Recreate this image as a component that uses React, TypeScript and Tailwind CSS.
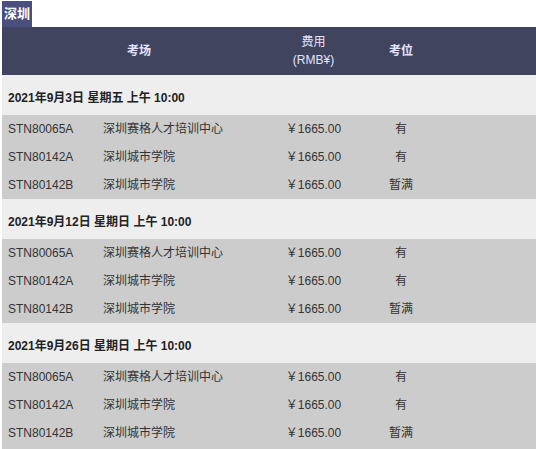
const FONT = { fontFamily: '"Liberation Sans", Arial, "Noto Sans CJK SC", sans-serif' };

type Seat = { code: string; venue: string; price: string; status: string };

const sessions: { date: string; seats: Seat[] }[] = [
  { date: "2021年9月3日 星期五 上午 10:00", seats: [] },
  { date: "2021年9月12日 星期日 上午 10:00", seats: [] },
  { date: "2021年9月26日 星期日 上午 10:00", seats: [] },
].map((s) => ({
  ...s,
  seats: [
    { code: "STN80065A", venue: "深圳赛格人才培训中心", price: "￥1665.00", status: "有" },
    { code: "STN80142A", venue: "深圳城市学院", price: "￥1665.00", status: "有" },
    { code: "STN80142B", venue: "深圳城市学院", price: "￥1665.00", status: "暂满" },
  ],
}));

const COLS = "grid grid-cols-[101px_173px_75px_100px_1fr]";

export default function App() {
  return (
    <div className="w-[536px] h-[449px] overflow-hidden bg-white pl-[2px] pt-[1px]" style={FONT}>
      <div className="inline-flex h-[26px] items-center bg-[#4b4f7d] px-[2px] text-[13px] font-bold text-white">
        深圳
      </div>
      <div className={`${COLS} h-[48px] items-center bg-[#41445f] text-[12px] text-[#e2e4ff]`}>
        <div className="col-span-2 text-center font-bold">考场</div>
        <div className="text-center leading-[18px]">
          费用
          <br />
          (RMB¥)
        </div>
        <div className="text-center font-bold">考位</div>
        <div />
      </div>
      {sessions.map((s) => (
        <div key={s.date}>
          <div className="flex h-[40px] items-center bg-[#eeeeee] pl-[6px] pt-[6px] text-[12px] font-bold text-[#222]">
            {s.date}
          </div>
          {s.seats.map((r) => (
            <div key={r.code} className={`${COLS} h-[28px] items-center bg-[#cccccc] text-[12px] text-[#333]`}>
              <div className="pl-[6px]">{r.code}</div>
              <div>{r.venue}</div>
              <div className="text-center">{r.price}</div>
              <div className="text-center">{r.status}</div>
              <div />
            </div>
          ))}
        </div>
      ))}
      <div className="h-[12px] bg-[#cccccc]" />
    </div>
  );
}
